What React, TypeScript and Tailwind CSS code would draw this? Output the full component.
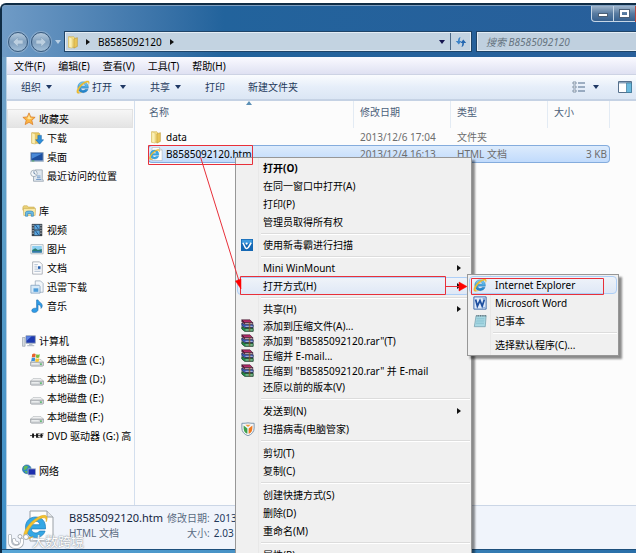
import type { ReactNode } from "react";

type IconProps = { className?: string };

function IeIcon({ className = "size-4" }: IconProps) {
  return (
    <svg viewBox="0 0 32 32" className={className} aria-hidden="true">
      <defs>
        <linearGradient id="ieBlue" x1="0" y1="0" x2="0" y2="1">
          <stop offset="0" stopColor="#7fd4f8" />
          <stop offset="1" stopColor="#1679c4" />
        </linearGradient>
      </defs>
      <path
        d="M16 4C9 4 4 9.500 4 16.500S9.500 29 16.500 29c5.400 0 9.500-2.900 11.100-7.600h-6.600c-1 1.500-2.400 2.300-4.300 2.300-3.100 0-5.300-1.900-5.500-4.900h17.100C29 10 24 4 16 4Zm-4.800 9.500c.6-2.700 2.400-4.200 5.100-4.200s4.500 1.500 4.900 4.200Z"
        fill="url(#ieBlue)"
        stroke="#1d6fae"
        strokeWidth="0.8"
      />
      <path
        d="M6.500 30.500C0 31.500.5 23.500 6.500 15.500 12.500 7 23.500.5 28.500 2.500c2.500 1.100 2.300 4.500.7 7.500.2-2.700-.2-4.600-2.400-4.900-4.300-.6-11.500 4.500-16.300 10.900C5.500 22.500 4 28.500 8.500 29c1.700.1 3.200-.5 4.800-1.400-2.200 1.600-4.600 2.700-6.800 2.900Z"
        fill="#f2c230"
        stroke="#d39a12"
        strokeWidth="0.6"
      />
    </svg>
  );
}

function HtmlFileIcon({ className = "size-4" }: IconProps) {
  return (
    <svg viewBox="0 0 32 32" className={className} aria-hidden="true">
      <path d="M7 1h17l6 6v24H7Z" fill="#fdfdfd" stroke="#9aa0a6" />
      <path d="M24 1v6h6" fill="#e2e5e8" stroke="#9aa0a6" />
      <path
        d="M12.500 7C6.500 7 2.500 11.500 2.500 17.200S6.700 27.500 12.800 27.500c4.600 0 8-2.400 9.300-6.400h-5.600c-.8 1.200-2 1.900-3.600 1.900-2.700 0-4.400-1.600-4.600-4.100h14.200C23 11.500 19 7 12.500 7Zm-4.100 7.700c.5-2.200 2-3.400 4.300-3.400s3.700 1.200 4.100 3.400Z"
        fill="#35a7e4"
        stroke="#1b7bbd"
        strokeWidth="0.7"
      />
      <path
        d="M4.500 29C-1 29.700-.2 22.500 5 16 10 9.500 18.500 4 22.700 5.600c2 1 1.800 3.700.5 6.200.1-2.400-.3-3.700-2-4-3.500-.5-9.500 3.700-13.400 9C3.700 22.300 2.500 27.200 6.200 27.600c1.400.1 2.600-.4 3.800-1.100-1.700 1.300-3.700 2.300-5.500 2.500Z"
        fill="#f2c230"
        stroke="#d8a31c"
        strokeWidth="0.5"
      />
    </svg>
  );
}

function FolderIcon({ className = "size-4" }: IconProps) {
  return (
    <svg viewBox="0 0 16 16" className={className} aria-hidden="true">
      <path d="M3 2h6l1 1v11H3Z" fill="#f6e08a" stroke="#c9a63c" strokeWidth="0.6" />
      <path d="M9 4.500 13 3v10l-4 2Z" fill="#e8c558" stroke="#b9922c" strokeWidth="0.6" />
      <path d="M3 2l4 1.500V15l-4-1Z" fill="#fbf0b4" stroke="#d3b452" strokeWidth="0.5" />
    </svg>
  );
}

function StarIcon() {
  return (
    <svg viewBox="0 0 16 16" className="size-[14px]" aria-hidden="true">
      <path
        d="m8 1 2 4.600 5 .5-3.800 3.300 1.200 5L8 11.800 3.600 14.400l1.200-5L1 6.100l5-.5Z"
        fill="#fbb544"
        stroke="#d8761c"
        strokeWidth="0.8"
      />
      <path d="M8 3 9.300 6.500l3 .3L8 8.500 5 6.500h1.600Z" fill="#fee79c" />
    </svg>
  );
}

function DownloadIcon() {
  return (
    <svg viewBox="0 0 16 16" className="size-[14px]" aria-hidden="true">
      <path d="M2 2h8l1 1v11H2Z" fill="#e9ca62" stroke="#b9962f" strokeWidth="0.6" />
      <path d="M2 2l4 1.500V15l-4-1Z" fill="#fbf0b4" stroke="#d3b452" strokeWidth="0.5" />
      <path d="M9 5h4v5h2.500L11 15 6.500 10H9Z" fill="#2d8fdc" stroke="#155f9f" strokeWidth="0.6" />
    </svg>
  );
}

function DesktopIcon() {
  return (
    <svg viewBox="0 0 16 16" className="size-[14px]" aria-hidden="true">
      <rect x="1" y="3" width="14" height="10" fill="#1d4f9f" stroke="#8aa0b8" />
      <path d="M2 4h12L2 10Z" fill="#4a8ad8" />
      <path d="M1 12h14v1.500H1Z" fill="#b4c4d4" />
      <path d="M2 12h3v1H2Z" fill="#4ca64c" />
    </svg>
  );
}

function RecentIcon() {
  return (
    <svg viewBox="0 0 16 16" className="size-[14px]" aria-hidden="true">
      <path d="M6 1h8v10l1.500 3H4V8Z" fill="#dfe7ef" stroke="#8a98a6" strokeWidth="0.8" />
      <path d="M8 8h4M8 10h4M7 12h6" stroke="#5b8ac2" strokeWidth="0.9" />
      <circle cx="4.500" cy="5" r="3.700" fill="#f4f7fa" stroke="#8a98a6" strokeWidth="0.8" />
      <path d="M4.500 2.500V5l2 1" fill="none" stroke="#4c6f96" strokeWidth="0.9" />
    </svg>
  );
}

function LibraryIcon() {
  return (
    <svg viewBox="0 0 16 16" className="size-[14px]" aria-hidden="true">
      <path d="M1 3.500 2 2h4l1 1.500h7V7H1Z" fill="#ecd47a" stroke="#c3a23e" strokeWidth="0.6" />
      <path d="M1.500 5h14L15 13H2Z" fill="#f8e9a8" stroke="#c3a23e" strokeWidth="0.6" />
      <path d="M4 14V9.500C4 7.500 13 7.500 13 9.500V14h-2.500v-3h-4v3Z" fill="#6cbbe6" stroke="#2c7fb5" strokeWidth="0.7" />
    </svg>
  );
}

function VideoIcon() {
  return (
    <svg viewBox="0 0 16 16" className="size-[14px]" aria-hidden="true">
      <path d="M2 1h12v14H2Z" fill="#38424c" />
      <path d="M5 2h6v5.500H5ZM5 8.500h6V14H5Z" fill="#5aa5dc" />
      <path d="m6 2 4 5.500M6 8.500 10 14" stroke="#1d4c84" />
      <path d="M3.500 2v12M12.500 2v12" stroke="#e6eaee" strokeDasharray="1.500 1.500" />
    </svg>
  );
}

function PictureIcon() {
  return (
    <svg viewBox="0 0 16 16" className="size-[14px]" aria-hidden="true">
      <path d="M1 3h14v10.500H1Z" fill="#fafafa" stroke="#9aa6b0" strokeWidth="0.8" />
      <path d="M2.500 4.500h11V12h-11Z" fill="#8fd0f2" />
      <path d="M2.500 9 6 7l3 2 4.500-1v4h-11Z" fill="#2a7f74" />
      <path d="M2.500 10.500h11V12h-11Z" fill="#3876b8" />
    </svg>
  );
}

function DocumentIcon() {
  return (
    <svg viewBox="0 0 16 16" className="size-[14px]" aria-hidden="true">
      <path d="M3 1h8l3 3v11H3Z" fill="#fcfcfd" stroke="#9098a2" strokeWidth="0.8" />
      <path d="M5 4h4M5 6h3M5 8h3M5 10h7M5 12h7" stroke="#a5b6c8" strokeWidth="0.8" />
      <path d="M9 6h3v3H9Z" fill="#2861ad" />
    </svg>
  );
}

function ThunderIcon() {
  return (
    <svg viewBox="0 0 16 16" className="size-[14px]" aria-hidden="true">
      <path d="M6 1h6l3 3v10H6Z" fill="#f2f6fa" stroke="#8ea1b4" strokeWidth="0.8" />
      <path d="M1 6h9.500l1 1.500v7.500H1Z" fill="#d7eaf8" stroke="#7798b8" strokeWidth="0.8" />
      <path d="M4 9.500h5.500v4H4Z" fill="#4f9edb" />
    </svg>
  );
}

function MusicIcon() {
  return (
    <svg viewBox="0 0 16 16" className="size-[14px]" aria-hidden="true">
      <path
        d="M7.500 1h1.700c.3 2.500 5.300 3.300 4.800 7-.2 1.300-.7 2-1.500 2.800.5-2.600-1-4-3.300-4.600V12c0 4-7.200 4.700-7.200 1.200 0-2.400 3.500-3.200 5.500-2.500Z"
        fill="#2f9be6"
        stroke="#1565a8"
        strokeWidth="0.6"
      />
    </svg>
  );
}

function ComputerIcon() {
  return (
    <svg viewBox="0 0 16 16" className="size-[14px]" aria-hidden="true">
      <path d="M0.500 4h3v10h-3Z" fill="#d6dbe0" stroke="#8d97a2" strokeWidth="0.7" />
      <path d="M4.500 2h10.800v8.500H4.500Z" fill="#1d39b0" stroke="#9da9b7" />
      <path d="M5 2.500h6L5 8Z" fill="#5d84e4" />
      <path d="M8 11h4v1.500h2V14H6v-1.500h2Z" fill="#b7c0ca" />
    </svg>
  );
}

function Drive() {
  return (
    <>
      <path d="M3.500 7.500h9l3 3h-15Z" fill="#f1f2f3" stroke="#a3a8ad" strokeWidth="0.6" />
      <path d="M0.500 10.500h15V14l-1 1h-13l-1-1Z" fill="#cfd3d6" stroke="#7b8187" strokeWidth="0.6" />
      <path d="M2 11.500h8V13H2Z" fill="#eceeef" />
      <path d="M11.500 12h2v1.500h-2Z" fill="#36b24a" />
    </>
  );
}

function DriveIcon() {
  return (
    <svg viewBox="0 0 16 16" className="size-[14px]" aria-hidden="true">
      <Drive />
    </svg>
  );
}

function SystemDriveIcon() {
  return (
    <svg viewBox="0 0 16 16" className="size-[14px]" aria-hidden="true">
      <Drive />
      <path d="M2.500 1.500Q4.500 0 6.500 1.200L6 5Q4 4 2 5Z" fill="#e8622c" />
      <path d="M7.200 1.500q2 1 4 0l-.6 3.700q-2 1-4 0Z" fill="#7dbb3c" />
      <path d="M2 5.800Q4 4.700 5.900 5.800L5.400 9.500q-2-1-4 0Z" fill="#3c8fd8" />
      <path d="M6.600 6q2 1 4 0L10 9.800q-2 1-4 0Z" fill="#f5c431" />
    </svg>
  );
}

function DvdIcon() {
  return (
    <svg viewBox="0 0 16 16" className="size-[14px]" aria-hidden="true">
      <path d="M0 7.500h15" stroke="#555" strokeWidth="1.200" />
      <path d="M3.500 5v5M8 5v5M13 5v5" stroke="#161616" strokeWidth="2.200" />
      <path d="M9 5.500h2M14 5.500h1.500M9 9.500h2" stroke="#333" />
    </svg>
  );
}

function NetworkIcon() {
  return (
    <svg viewBox="0 0 16 16" className="size-[14px]" aria-hidden="true">
      <circle cx="5.500" cy="6" r="5" fill="#2f86c6" stroke="#1d5d92" strokeWidth="0.6" />
      <path d="M2 3q3-2 5 0L5 6 2 7ZM3 8l3 0-1 3Z" fill="#62b95a" />
      <path d="M7 5.500h8.500v7H7Z" fill="#1d2fae" stroke="#a8b3c2" strokeWidth="0.9" />
      <path d="M10 13h3v1h1.500v1.300H8.500V14H10Z" fill="#a9b4c0" />
    </svg>
  );
}

function ScanIcon() {
  return (
    <svg viewBox="0 0 16 16" className="size-[12px]" aria-hidden="true">
      <path d="M0 0h16v16H0Z" fill="#1568b4" />
      <path d="M1 1h14v5H1Z" fill="#3f9ade" />
      <path d="M2.500 5 6 12q2 1.500 4-1l3.500-6" fill="none" stroke="#fff" strokeWidth="2" />
      <circle cx="7.500" cy="6" r="1.500" fill="#fff" />
    </svg>
  );
}

function RarIcon() {
  return (
    <svg viewBox="0 0 16 16" className="size-[13px]" aria-hidden="true">
      <path d="M1 1h10l3.500 3.500H4.500Z" fill="#b52a68" stroke="#2b1420" strokeWidth="0.7" />
      <path d="M1 1v2.500L4.500 6h10V4.500h-10Z" fill="#7b1a46" stroke="#2b1420" strokeWidth="0.7" />
      <path d="M1 5v3l3.500 2.500h10.500V7H4.500Z" fill="#3c5cc0" stroke="#14193a" strokeWidth="0.9" />
      <path d="M1 9.300v3L4.500 15.200H15v-3.700H4.500Z" fill="#23904a" stroke="#0d2f17" strokeWidth="0.9" />
      <path d="M5 5.400h9M5.500 9h9M5.500 13.500h9" stroke="#e4e8ea" strokeWidth="0.9" />
      <path d="M9.500 4.500h2v10.500h-2Z" fill="#8a5a24" opacity="0.7" />
    </svg>
  );
}

function ShieldIcon() {
  return (
    <svg viewBox="0 0 16 16" className="size-[14px]" aria-hidden="true">
      <path d="M1 1.500q4 0 7-.5 3 .5 7 .5V7q0 6-7 8.800Q1 13 1 7Z" fill="#f4f6f8" stroke="#6f8ba5" />
      <path d="M3 4 7.300 7.500v6Q3 11.500 3 7Z" fill="#3fa04b" />
      <path d="M13 4 8.700 7.500v6Q13 11.500 13 7Z" fill="#ee7a22" />
      <path d="M5 3h6L8 5.800Z" fill="#f29a3c" />
    </svg>
  );
}

function WordIcon() {
  return (
    <svg viewBox="0 0 16 16" className="size-[14px]" aria-hidden="true">
      <path d="M1 1h14v14H1Z" fill="#dfeafa" stroke="#2c5ca4" />
      <path d="M11 3h3M11.500 13h2.500" stroke="#7aa0d6" />
      <path d="m3 4 2 7.500L8 5l2.500 6.500L13 4" fill="none" stroke="#1d4f9f" strokeWidth="2" />
    </svg>
  );
}

function NotepadIcon() {
  return (
    <svg viewBox="0 0 16 16" className="size-[14px]" aria-hidden="true">
      <path d="M3.500 2H15l-1 12.500H1.500Z" fill="#a9d9e4" stroke="#6f9aa8" strokeWidth="0.8" />
      <path d="M4 5h9M4 7h9M3.500 9h9M3.500 11h9" stroke="#7db9c8" strokeWidth="0.7" />
      <path d="M4 2h11" stroke="#5f6f78" strokeWidth="1.800" strokeDasharray="1 1" />
    </svg>
  );
}

function Caret({ className = "text-[#1f3864]" }: IconProps) {
  return (
    <svg viewBox="0 0 6 4" className={`h-1 w-1.5 shrink-0 ${className}`} aria-hidden="true">
      <path d="M0 0h6L3 4Z" fill="currentColor" />
    </svg>
  );
}

function RightArrow() {
  return (
    <svg viewBox="0 0 4 6" className="h-1.5 w-1 shrink-0" aria-hidden="true">
      <path d="M0 0v6l4-3Z" fill="#111" />
    </svg>
  );
}

function NavButton({ label, flip }: { label: string; flip?: boolean }) {
  return (
    <button
      type="button"
      aria-label={label}
      className="flex size-5 items-center justify-center rounded-full border border-[#38597c] bg-linear-to-b from-[#b5cadd] via-[#7f9fbe] to-[#a3bfd8] ring-1 ring-[#9db8d2]/60"
    >
      <svg viewBox="0 0 12 12" className={flip ? "size-3 rotate-180" : "size-3"} aria-hidden="true">
        <path d="M6 1 1 6l5 5V8h5V4H6Z" fill="#bccfe0" stroke="#8ba6c0" strokeWidth="0.7" />
      </svg>
    </button>
  );
}

type TreeGroup = {
  label: string;
  icon: ReactNode;
  active?: boolean;
  items: { label: string; icon: ReactNode }[];
};

const tree: TreeGroup[] = [
  {
    label: "收藏夹",
    icon: <StarIcon />,
    active: true,
    items: [
      { label: "下载", icon: <DownloadIcon /> },
      { label: "桌面", icon: <DesktopIcon /> },
      { label: "最近访问的位置", icon: <RecentIcon /> },
    ],
  },
  {
    label: "库",
    icon: <LibraryIcon />,
    items: [
      { label: "视频", icon: <VideoIcon /> },
      { label: "图片", icon: <PictureIcon /> },
      { label: "文档", icon: <DocumentIcon /> },
      { label: "迅雷下载", icon: <ThunderIcon /> },
      { label: "音乐", icon: <MusicIcon /> },
    ],
  },
  {
    label: "计算机",
    icon: <ComputerIcon />,
    items: [
      { label: "本地磁盘 (C:)", icon: <SystemDriveIcon /> },
      { label: "本地磁盘 (D:)", icon: <DriveIcon /> },
      { label: "本地磁盘 (E:)", icon: <DriveIcon /> },
      { label: "本地磁盘 (F:)", icon: <DriveIcon /> },
      { label: "DVD 驱动器 (G:) 高", icon: <DvdIcon /> },
    ],
  },
  { label: "网络", icon: <NetworkIcon />, items: [] },
];

type MenuEntry =
  | { kind: "item"; label: string; icon?: ReactNode; bold?: boolean; arrow?: boolean; hover?: boolean; compact?: boolean }
  | { kind: "line"; tight?: boolean };

const contextMenu: MenuEntry[] = [
  { kind: "item", label: "打开(O)", bold: true },
  { kind: "item", label: "在同一窗口中打开(A)" },
  { kind: "item", label: "打印(P)" },
  { kind: "item", label: "管理员取得所有权" },
  { kind: "line", tight: true },
  { kind: "item", label: "使用新毒霸进行扫描", icon: <ScanIcon /> },
  { kind: "line", tight: true },
  { kind: "item", label: "Mini WinMount", arrow: true },
  { kind: "item", label: "打开方式(H)", arrow: true, hover: true },
  { kind: "line", tight: true },
  { kind: "item", label: "共享(H)", arrow: true },
  { kind: "item", label: "添加到压缩文件(A)...", icon: <RarIcon />, compact: true },
  { kind: "item", label: '添加到 "B8585092120.rar"(T)', icon: <RarIcon />, compact: true },
  { kind: "item", label: "压缩并 E-mail...", icon: <RarIcon />, compact: true },
  { kind: "item", label: '压缩到 "B8585092120.rar" 并 E-mail', icon: <RarIcon />, compact: true },
  { kind: "item", label: "还原以前的版本(V)" },
  { kind: "line" },
  { kind: "item", label: "发送到(N)", arrow: true },
  { kind: "item", label: "扫描病毒(电脑管家)", icon: <ShieldIcon /> },
  { kind: "line" },
  { kind: "item", label: "剪切(T)" },
  { kind: "item", label: "复制(C)" },
  { kind: "line" },
  { kind: "item", label: "创建快捷方式(S)" },
  { kind: "item", label: "删除(D)" },
  { kind: "item", label: "重命名(M)" },
  { kind: "line" },
  { kind: "item", label: "属性(R)" },
];

const openWithMenu: MenuEntry[] = [
  { kind: "item", label: "Internet Explorer", icon: <IeIcon className="size-[14px]" />, hover: true },
  { kind: "item", label: "Microsoft Word", icon: <WordIcon /> },
  { kind: "item", label: "记事本", icon: <NotepadIcon /> },
  { kind: "line" },
  { kind: "item", label: "选择默认程序(C)..." },
];

function Menu({ entries, label, className }: { entries: MenuEntry[]; label: string; className: string }) {
  return (
    <div
      role="menu"
      aria-label={label}
      className={`absolute border border-[#979797] bg-[#f0f0f0] bg-linear-to-r from-transparent from-[22px] via-[#e0e0e0] via-[22px] to-transparent to-[23px] p-px shadow-[3px_3px_2px_rgba(0,0,0,0.45)] ${className}`}
    >
      {entries.map((entry, index) =>
        entry.kind === "line" ? (
          <div
            key={index}
            role="separator"
            className={`ml-6 flex items-center ${entry.tight ? "h-[5px]" : "h-1.5"}`}
          >
            <span className="h-0.5 w-full border-t border-[#dcdcdc] bg-white" />
          </div>
        ) : (
          <button
            key={index}
            type="button"
            role="menuitem"
            className={`flex w-full items-center rounded-sm border pr-2 text-left ${entry.compact ? "h-[15px]" : "h-[18px]"} ${
              entry.hover ? "border-[#aecff7] bg-linear-to-b from-[#eff3f9] to-[#dfe8f6]" : "border-transparent"
            } ${entry.bold ? "font-bold" : ""}`}
          >
            <span className="flex w-[25px] shrink-0 items-center pl-[3px]">{entry.icon}</span>
            <span className="flex-1 whitespace-nowrap">{entry.label}</span>
            {entry.arrow ? <RightArrow /> : null}
          </button>
        ),
      )}
    </div>
  );
}

function TitleBar() {
  return (
    <header className="flex h-[52px] shrink-0 flex-col justify-between rounded-tl border-t border-[#7f9fc0] bg-linear-to-r from-[#6f9bc6] via-[#22639c] via-35% to-[#285f9b] pb-1.5">
      <div className="flex h-4 justify-end text-white">
        <button
          type="button"
          aria-label="最小化"
          className="flex w-[23px] items-end justify-center rounded-bl border border-t-0 border-[#c6d6e6] bg-linear-to-b from-[#9fb5cb] via-[#587ba1] to-[#36608e] pb-1"
        >
          <span className="h-1 w-2.5 border border-[#4b5f76] bg-white" />
        </button>
        <button
          type="button"
          aria-label="最大化"
          className="flex w-[21px] items-center justify-center border-b border-[#c6d6e6] bg-linear-to-b from-[#9fb5cb] via-[#587ba1] to-[#36608e]"
        >
          <span className="h-[7px] w-[9px] border-2 border-white outline outline-[#4b5f76]" />
        </button>
        <button type="button" aria-label="关闭" className="w-px bg-[#b8463e]" />
      </div>

      <div className="flex h-[19px] items-center pl-1.5">
        <div className="flex items-center gap-[3px]">
          <NavButton label="后退" />
          <NavButton label="前进" flip />
        </div>
        <div className="flex w-[14px] justify-center">
          <Caret className="text-[#b9cfe4]" />
        </div>
        <div className="flex h-full flex-1 items-center border border-[#e4edf5] bg-[#c3d3e1] outline outline-[#1f4468]">
          <div className="flex flex-1 items-center">
            <FolderIcon className="size-[14px]" />
            <div className="flex items-center gap-2 pl-1.5">
              <RightArrow />
              <button type="button">B8585092120</button>
              <RightArrow />
            </div>
          </div>
          <button type="button" aria-label="历史记录" className="flex h-full w-4 items-center justify-center">
            <Caret className="text-[#16164f]" />
          </button>
          <button
            type="button"
            aria-label="刷新"
            className="flex h-full w-5 items-center justify-center border-l border-[#4c6a88]"
          >
            <svg viewBox="0 0 12 12" className="size-3" aria-hidden="true">
              <path d="M5.500 1Q3 1.500 3 5H.8L3.800 8.500 6.500 5H4.700Q4.700 3 5.500 1Z" fill="#3b83c8" />
              <path d="M6.500 11Q9 10.500 9 7h2.200L8.300 3.500 5.500 7h1.800Q7.300 9 6.500 11Z" fill="#2467b0" />
            </svg>
          </button>
        </div>
        <input
          type="text"
          aria-label="搜索"
          placeholder="搜索 B8585092120"
          className="ml-1.5 h-full w-[159px] border border-r-0 border-[#e4edf5] bg-[#c0d0df] pl-2 italic outline outline-[#1f4468] placeholder:text-[#66747f]"
        />
      </div>
    </header>
  );
}

function Toolbar() {
  return (
    <div className="flex h-[26px] shrink-0 items-center border-b-2 border-[#c5d2e4] bg-linear-to-b from-[#fafcfe] via-[#e6eef9] to-[#dbe6f4] pl-3.5 text-[#1e395b]">
      <button type="button" className="flex w-[55px] items-center gap-[5px]">
        组织
        <Caret />
      </button>
      <button type="button" className="flex w-[74px] items-center">
        <IeIcon className="mr-0.5 size-[14px]" />
        打开
        <Caret className="ml-2 text-[#1f3864]" />
      </button>
      <button type="button" className="flex w-[55px] items-center gap-[5px]">
        共享
        <Caret />
      </button>
      <button type="button" className="w-[43px] text-left">
        打印
      </button>
      <button type="button">新建文件夹</button>
      <div className="ml-auto flex items-center pr-1">
        <button type="button" aria-label="更改视图">
          <svg viewBox="0 0 14 12" className="h-3 w-3.5" aria-hidden="true">
            <path d="M1 1h3v2H1ZM1 5h3v2H1ZM1 9h3v2H1Z" fill="#fff" stroke="#6a7f96" strokeWidth="0.8" />
            <path d="M6 2h7M6 6h7M6 10h7" stroke="#4f6a8a" />
          </svg>
        </button>
        <button type="button" aria-label="更多选项" className="px-[7px] py-1">
          <Caret />
        </button>
        <button type="button" aria-label="显示预览窗格" className="ml-3">
          <svg viewBox="0 0 14 12" className="h-3 w-3.5" aria-hidden="true">
            <path d="M.5.5h13v11H.5Z" fill="#fff" stroke="#56708c" />
            <path d="M1 1h12v1.500H1Z" fill="#8ba3bb" />
            <path d="M8.500 2v9.500h5V2Z" fill="#6ab9dd" stroke="#3c7899" strokeWidth="0.7" />
          </svg>
        </button>
      </div>
    </div>
  );
}

function Sidebar() {
  return (
    <nav className="flex w-32 shrink-0 flex-col gap-4 overflow-hidden border-r border-[#d3dfee] pt-2">
      {tree.map((group) => (
        <ul key={group.label}>
          <li
            className={`mr-px flex h-[19px] items-center border pl-[14px] ${
              group.active ? "border-[#e2e2e2] bg-linear-to-b from-[#f6f6f6] to-[#e4e4e4]" : "border-transparent"
            }`}
          >
            <button type="button" className="flex items-center gap-[3px]">
              {group.icon}
              {group.label}
            </button>
          </li>
          {group.items.map((item) => (
            <li key={item.label} className="mr-px flex h-[19px] items-center overflow-hidden pl-[23px]">
              <button type="button" className="flex items-center gap-[3px] whitespace-nowrap">
                <span className="shrink-0">{item.icon}</span>
                {item.label}
              </button>
            </li>
          ))}
        </ul>
      ))}
    </nav>
  );
}

const selectedCell = "border-y border-[#84acdd] bg-linear-to-b from-[#dcebfc] to-[#c1dbfc]";

function FileList() {
  return (
    <main className="min-w-0 flex-1 pl-[13px]">
      <table className="w-[462px] table-fixed border-separate border-spacing-0 text-left">
        <colgroup>
          <col className="w-[206px]" />
          <col className="w-[97px]" />
          <col className="w-[97px]" />
          <col className="w-[62px]" />
        </colgroup>
        <thead className="text-[#4c607a]">
          <tr className="h-[27px] align-top">
            <th className="relative border-r border-[#e3ebf4] pt-1 pl-px font-normal">
              名称
              <svg viewBox="0 0 6 4" className="absolute top-0 left-[98px] h-1 w-1.5" aria-hidden="true">
                <path d="M0 4 3 0l3 4Z" fill="#5b8fb5" />
              </svg>
            </th>
            <th className="border-r border-[#e3ebf4] pt-1 pl-1.5 font-normal">修改日期</th>
            <th className="border-r border-[#e3ebf4] pt-1 pl-1.5 font-normal">类型</th>
            <th className="border-r border-[#e3ebf4] pt-1 pl-1.5 font-normal">大小</th>
          </tr>
        </thead>
        <tbody className="text-[#6d6d6d]">
          <tr className="h-[17px]">
            <td className="pl-px text-black">
              <span className="flex items-center gap-[3px]">
                <FolderIcon className="size-[14px]" />
                data
              </span>
            </td>
            <td className="pl-1.5">2013/12/6 17:04</td>
            <td className="pl-1.5">文件夹</td>
            <td />
          </tr>
          <tr className="h-[18px]">
            <td className={`rounded-l-sm border-l text-black ${selectedCell}`}>
              <span className="flex items-center gap-[3px]">
                <HtmlFileIcon className="size-[14px]" />
                B8585092120.htm
              </span>
            </td>
            <td className={`pl-1.5 ${selectedCell}`}>2013/12/4 16:13</td>
            <td className={`pl-1.5 ${selectedCell}`}>HTML 文档</td>
            <td className={`rounded-r-sm border-r pr-0.5 text-right ${selectedCell}`}>3 KB</td>
          </tr>
        </tbody>
      </table>
    </main>
  );
}

function DetailsPane() {
  return (
    <footer className="flex h-11 shrink-0 gap-1 border-t border-[#cbd6e6] bg-[#f0f4fb] pt-1 pl-4">
      <HtmlFileIcon className="mr-2.5 size-8" />
      <div>
        <p className="text-[11px] leading-4 text-[#14263f]">B8585092120.htm</p>
        <p className="leading-[14px] text-[#5a6b82]">HTML 文档</p>
      </div>
      <dl className="grid auto-rows-[15px] grid-cols-[auto_auto] content-start gap-x-1 leading-4">
        <dt className="text-right text-[#5a6b82]">修改日期:</dt>
        <dd className="text-[#1e395b]">2013</dd>
        <dt className="text-right text-[#5a6b82]">大小:</dt>
        <dd className="text-[#1e395b]">2.03</dd>
      </dl>
    </footer>
  );
}

function Watermark() {
  return (
    <div className="absolute bottom-1 left-2 flex items-center gap-0.5 text-[13px] leading-4 text-white [text-shadow:0_0_1px_#8a939c,0_0_2px_#8a939c]">
      <svg viewBox="0 0 22 16" className="h-4 w-[22px]" fill="none" aria-hidden="true">
        <path d="M2 3v5q0 6 6 6t6-6V7M6 7q0 3 3 3" stroke="#a5acb4" strokeWidth="4" strokeLinecap="round" />
        <path d="M2 3v5q0 6 6 6t6-6V7M6 7q0 3 3 3" stroke="#fff" strokeWidth="2.500" strokeLinecap="round" />
        <circle cx="12" cy="3.500" r="2" fill="#fff" stroke="#a5acb4" />
        <circle cx="18" cy="4" r="2.500" fill="#fff" stroke="#a5acb4" />
      </svg>
      大数跨境
    </div>
  );
}

function Annotations() {
  return (
    <svg
      viewBox="0 0 636 553"
      className="pointer-events-none absolute top-0 left-0 h-[553px] w-[636px]"
      fill="none"
      stroke="#e8303a"
      aria-hidden="true"
    >
      <path d="M148.500 145.500h104v19h-104Z" />
      <path d="M240.500 276.500h205v18h-205Z" />
      <path d="M471.500 278.500h132v16h-132Z" />
      <path d="M200.500 157 239 281M446 286.500h14" />
      <path d="m241 289-5.500-8 5.500-2ZM467 286.500l-8-4.500v9Z" fill="#f00" stroke="#f00" strokeWidth="0.5" />
    </svg>
  );
}

export default function App() {
  return (
    <div className="relative flex h-screen flex-col overflow-hidden bg-white pt-[3px] font-['Noto_Sans','Noto_Sans_CJK_SC',sans-serif] text-[10px] leading-[14px] text-black">
      <div className="flex min-h-0 flex-1 flex-col rounded-tl-md border-t-2 border-l-2 border-[#0f2c45] bg-linear-to-b from-[#7aa3ca] via-[#5e9fc8] via-35% to-[#3d8fc8]">
        <TitleBar />
        <div className="ml-1 flex min-h-0 flex-1 flex-col border-l border-[#b8cfe2] bg-[#fcfcfc]">
          <div className="flex h-[18px] shrink-0 items-center gap-[13px] border-b border-[#cdd3e4] bg-linear-to-b from-[#fafaff] to-[#dfe1f2] pl-[7px]">
            {["文件(F)", "编辑(E)", "查看(V)", "工具(T)", "帮助(H)"].map((label) => (
              <button key={label} type="button">
                {label}
              </button>
            ))}
          </div>
          <Toolbar />
          <div className="flex min-h-0 flex-1">
            <Sidebar />
            <FileList />
          </div>
          <DetailsPane />
        </div>
        <div className="h-1 shrink-0 border-t border-[#1d4f7c] bg-linear-to-r from-[#58a6d6] to-[#2a6fa8]" />
      </div>

      <Watermark />
      <Menu entries={contextMenu} label="右键菜单" className="top-[157px] left-[235px] w-[237px]" />
      <Menu entries={openWithMenu} label="打开方式" className="top-[274px] left-[467px] w-[152px]" />
      <Annotations />
    </div>
  );
}
